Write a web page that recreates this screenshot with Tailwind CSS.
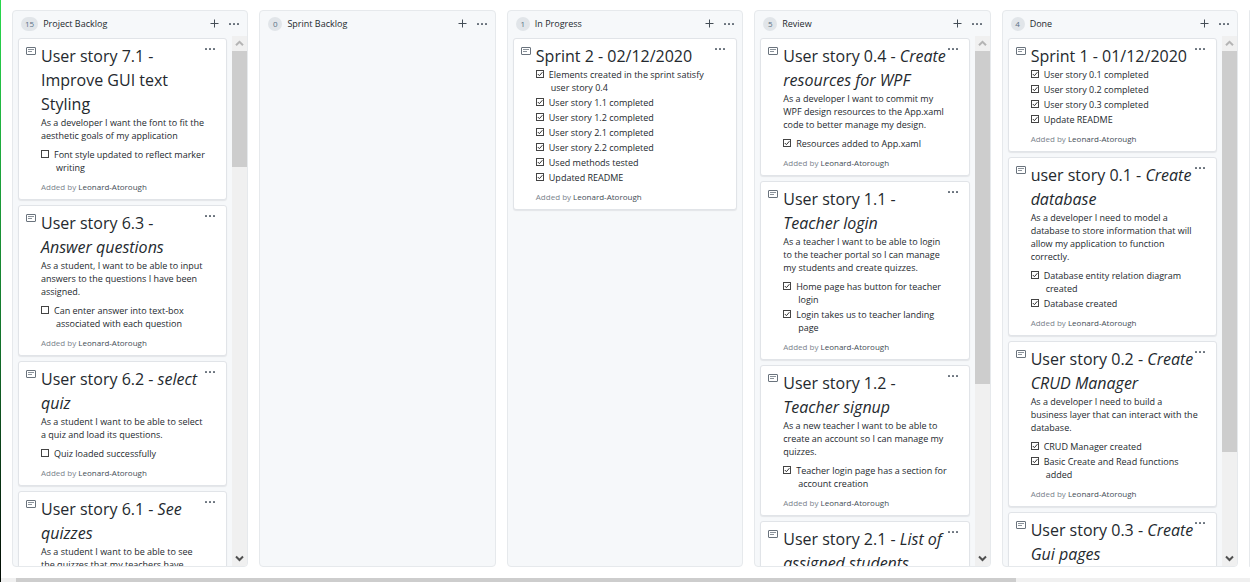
<!DOCTYPE html>
<html lang="en">
<head>
<meta charset="utf-8">
<title>Project board</title>
<script src="https://cdn.jsdelivr.net/npm/@tailwindcss/browser@4"></script>
</head>
<body class="bg-white font-['Open_Sans','Noto_Sans',sans-serif] text-[#24292e] antialiased">
<div class="flex h-screen overflow-hidden">
  <div class="w-px shrink-0 bg-linear-to-b from-[#28d94c] via-[#12702a] via-60% to-[#020a04]"></div>
  <div class="flex min-w-0 flex-1 flex-col">
    <main id="board" class="flex min-h-0 flex-1 gap-[11px] overflow-hidden pt-[10px] pb-[11px] pl-[11px]"></main>
    <div class="flex h-1 shrink-0 bg-[#f0f0f0] pl-[15px]"><div class="w-[81%] bg-[#cdcdcd]"></div></div>
  </div>
</div>
<script>
const dots = `<svg class="block" width="12" height="4" viewBox="0 0 12 4" fill="#6a737d"><rect x="1" y="1" width="2" height="2" rx=".5"/><rect x="5" y="1" width="2" height="2" rx=".5"/><rect x="9" y="1" width="2" height="2" rx=".5"/></svg>`;
const plus = `<svg class="block" width="9" height="9" viewBox="0 0 9 9" stroke="#444d56" stroke-width="1"><path d="M4.5 .5v8M.5 4.5h8"/></svg>`;
const note = `<svg class="block" width="10" height="8" viewBox="0 0 10 8" fill="none" stroke="#6a737d"><rect x=".5" y=".5" width="9" height="7" rx=".4"/><path d="M2 2.5h6M2 4.5h4" stroke="#8b939b"/></svg>`;
const up = `<svg class="block" width="9" height="7" viewBox="0 0 9 7" fill="none" stroke="#b4b4b4" stroke-width="2"><path d="M1 5.3 4.5 1.8 8 5.3"/></svg>`;
const down = `<svg class="block" width="9" height="7" viewBox="0 0 9 7" fill="none" stroke="#505050" stroke-width="2"><path d="M1 1.5 4.5 5 8 1.5"/></svg>`;
const tick = `<svg class="pointer-events-none absolute top-[2px] left-0" width="8" height="8" viewBox="0 0 8 8" fill="none" stroke="#333" stroke-width="1"><path d="M1.8 4 3.4 5.7 6.4 2.2"/></svg>`;

const columns = [
  { name: "Project Backlog", count: 15, thumb: 116, cards: [
    { title: "User story 7.1 -<br>Improve GUI text<br>Styling", text: "As a developer I want the font to fit the<br>aesthetic goals of my application", tasks: ["Font style updated to reflect marker<br>writing"] },
    { title: "User story 6.3 -<br><em>Answer questions</em>", text: "As a student, I want to be able to input<br>answers to the questions I have been<br>assigned.", tasks: ["Can enter answer into text-box<br>associated with each question"] },
    { title: "User story 6.2 - <em>select<br>quiz</em>", text: "As a student I want to be able to select<br>a quiz and load its questions.", tasks: ["Quiz loaded successfully"] },
    { title: "User story 6.1 - <em>See<br>quizzes</em>", text: "As a student I want to be able to see<br>the quizzes that my teachers have", tasks: [] } ] },
  { name: "Sprint Backlog", count: 0, cards: [] },
  { name: "In Progress", count: 1, cards: [
    { title: "Sprint 2 - 02/12/2020", done: true, tasks: ["Elements created in the sprint satisfy<br>user story 0.4", "User story 1.1 completed", "User story 1.2 completed", "User story 2.1 completed", "User story 2.2 completed", "Used methods tested", "Updated README"] } ] },
  { name: "Review", count: 5, thumb: 333, cards: [
    { title: "User story 0.4 - <em>Create<br>resources for WPF</em>", done: true, text: "As a developer I want to commit my<br>WPF design resources to the App.xaml<br>code to better manage my design.", tasks: ["Resources added to App.xaml"] },
    { title: "User story 1.1 -<br><em>Teacher login</em>", done: true, text: "As a teacher I want to be able to login<br>to the teacher portal so I can manage<br>my students and create quizzes.", tasks: ["Home page has button for teacher<br>login", "Login takes us to teacher landing<br>page"] },
    { title: "User story 1.2 -<br><em>Teacher signup</em>", done: true, text: "As a new teacher I want to be able to<br>create an account so I can manage my<br>quizzes.", tasks: ["Teacher login page has a section for<br>account creation"] },
    { title: "User story 2.1 - <em>List of<br>assigned students</em>", done: true, tasks: [] } ] },
  { name: "Done", count: 4, thumb: 401, cards: [
    { title: "Sprint 1 - 01/12/2020", done: true, tasks: ["User story 0.1 completed", "User story 0.2 completed", "User story 0.3 completed", "Update README"] },
    { title: "user story 0.1 - <em>Create<br>database</em>", done: true, text: "As a developer I need to model a<br>database to store information that will<br>allow my application to function<br>correctly.", tasks: ["Database entity relation diagram<br>created", "Database created"] },
    { title: "User story 0.2 - <em>Create<br>CRUD Manager</em>", done: true, text: "As a developer I need to build a<br>business layer that can interact with the<br>database.", tasks: ["CRUD Manager created", "Basic Create and Read functions<br>added"] },
    { title: "User story 0.3 - <em>Create<br>Gui pages</em>", done: true, tasks: [] } ] }
];

const task = (t, done) => `<li><label class="relative block pl-[15px] -indent-[2px]"><input type="checkbox" ${done ? "checked" : ""} class="absolute top-[2px] left-0 size-2 appearance-none border border-[#444] bg-white">${done ? tick : ""}${t}</label></li>`;

const card = c => `<article class="relative shrink-0 rounded-[3px] border border-[#e1e4e8] bg-white pt-[5px] pb-[6px] pl-[22px] shadow-[0_1px_1px_rgba(27,31,35,0.08)]">
  <span class="absolute top-2 left-[7px]">${note}</span>
  <button type="button" aria-label="Card menu" class="absolute top-2 right-[10px]">${dots}</button>
  <h3 class="text-[16px] leading-6 font-medium whitespace-nowrap">${c.title}</h3>
  <div class="flex flex-col gap-[6px] text-[9px] leading-[13px] whitespace-nowrap">
    ${c.text ? `<p>${c.text}</p>` : ""}
    ${c.tasks.length ? `<ul class="flex flex-col gap-[2px]">${c.tasks.map(t => task(t, c.done)).join("")}</ul>` : ""}
    ${c.tasks.length ? `<p class="text-[8px] text-[#7b848d]">Added by <a href="#" class="text-[#444d56]">Leonard-Atorough</a></p>` : `<div class="h-10"></div>`}
  </div>
</article>`;

const bar = h => `<div class="flex w-[15px] shrink-0 flex-col bg-[#f0f0f0]">
  <div class="flex h-[15px] shrink-0 items-center justify-center">${up}</div>
  <div class="bg-[#cdcdcd]" style="height:${h}px"></div>
  <div class="mt-auto flex h-[15px] shrink-0 items-center justify-center">${down}</div>
</div>`;

document.getElementById("board").innerHTML = columns.map(k => `<section class="flex min-w-0 flex-1 flex-col overflow-hidden rounded-[4px] border border-[#e6e9ec] bg-[#f6f8fa]">
  <header class="flex h-[25px] shrink-0 items-center pr-[7px] pl-2 text-[9px]">
    <span class="flex h-[14px] min-w-[14px] items-center justify-center rounded-full bg-[#e1e5e9] px-1 text-[8px] text-[#5a7186]">${k.count}</span>
    <h2 class="ml-[5px] font-medium">${k.name}</h2>
    <button type="button" aria-label="Add card" class="ml-auto">${plus}</button>
    <button type="button" aria-label="Column menu" class="ml-[9px]">${dots}</button>
  </header>
  <div class="flex min-h-0 flex-1">
    <div class="flex min-w-0 flex-1 flex-col gap-[5px] overflow-hidden px-[5px] pt-[2px]">${k.cards.map(card).join("")}</div>
    ${k.thumb ? bar(k.thumb) : ""}
  </div>
</section>`).join("") + `<section class="w-px shrink-0 rounded-l-[4px] border-l border-[#e6e9ec] bg-[#f6f8fa]"></section>`;
</script>
</body>
</html>
